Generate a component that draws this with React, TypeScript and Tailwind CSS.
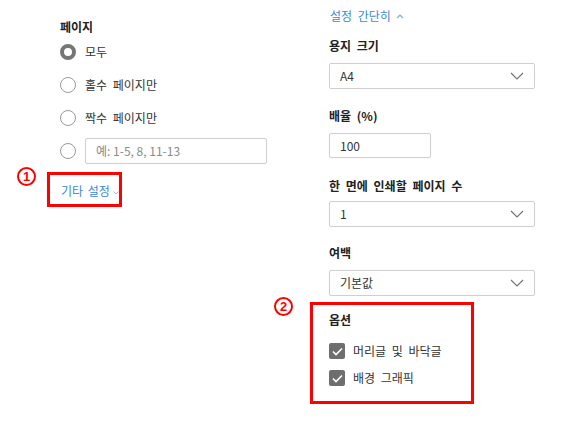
import React from "react";

const font = { fontFamily: '"Noto Sans CJK KR", "Noto Sans", sans-serif' };

function Chevron() {
  return (
    <svg width="14" height="8" viewBox="0 0 14 8" fill="none">
      <path d="M1 1l6 6 6-6" stroke="#707070" strokeWidth="1.1" />
    </svg>
  );
}

function Select({ value }: { value: string }) {
  return (
    <div className="ml-[19px] flex h-[26px] w-[206px] items-center justify-between rounded-[2px] border border-[#cfcfcf] bg-white pl-[10px] pr-[10px] text-[12px] text-[#333]">
      <span>{value}</span>
      <Chevron />
    </div>
  );
}

function Label({ children, className = "" }: { children: React.ReactNode; className?: string }) {
  return (
    <div className={`h-[16px] whitespace-nowrap text-[12px] font-bold leading-[16px] text-[#202124] ${className}`}>{children}</div>
  );
}

function Radio({ checked }: { checked?: boolean }) {
  return checked ? (
    <span className="box-border block h-[16px] w-[16px] shrink-0 rounded-full border-[4px] border-[#767676] bg-white" />
  ) : (
    <span className="box-border block h-[16px] w-[16px] shrink-0 rounded-full border-[1.5px] border-[#9a9a9a] bg-white" />
  );
}

function Check() {
  return (
    <span className="flex h-[16px] w-[16px] shrink-0 items-center justify-center rounded-[2px] bg-[#6e6e6e]">
      <svg width="11" height="9" viewBox="0 0 11 9" fill="none">
        <path d="M1 4.5l3 3 6-6" stroke="white" strokeWidth="1.6" />
      </svg>
    </span>
  );
}

function Badge({ n, className }: { n: string; className: string }) {
  return (
    <span
      className={`absolute flex h-[19px] w-[19px] items-center justify-center rounded-full border-[2px] border-[#ff0000] text-[13px] font-bold leading-none text-[#ff0000] ${className}`}
      style={{ fontFamily: '"Liberation Sans", sans-serif' }}
    >
      {n}
    </span>
  );
}

export default function App() {
  return (
    <div style={font} className="relative flex h-[436px] w-[567px] bg-white text-[#333] [word-spacing:3px]">
      <Badge n="1" className="left-[17px] top-[167px]" />
      <Badge n="2" className="left-[274px] top-[297px]" />

      {/* Left column */}
      <div className="ml-[47px] flex w-[263px] flex-col pt-[19px]">
        <Label className="ml-[13px]">페이지</Label>
        <div className="ml-[13px] flex flex-col">
          <div className="flex h-[33px] items-center gap-[9px]">
            <Radio checked />
            <span className="text-[12px]">모두</span>
          </div>
          <div className="flex h-[33px] items-center gap-[9px]">
            <Radio />
            <span className="text-[12px]">홀수 페이지만</span>
          </div>
          <div className="flex h-[33px] items-center gap-[9px]">
            <Radio />
            <span className="text-[12px]">짝수 페이지만</span>
          </div>
          <div className="flex h-[33px] items-center gap-[9px]">
            <Radio />
            <div className="flex h-[26px] w-[182px] items-center rounded-[2px] border border-[#cfcfcf] pl-[10px] text-[12px] text-[#8a8a8a] [word-spacing:0px]">
              예: 1-5, 8, 11-13
            </div>
          </div>
        </div>
        <div className="mt-[5px] flex h-[35px] w-[75px] items-center whitespace-nowrap border-[3px] border-[#ff0000] pl-[11px] pt-[3px] text-[12px] text-[#3b8ad8] [word-spacing:2px]">
          <span>기타 설정</span>
          <svg className="ml-[3px] mt-[4px] shrink-0" width="6" height="4" viewBox="0 0 6 4" fill="none">
            <path d="M0.5 0.5l2.5 2.5 2.5-2.5" stroke="#9bb8d6" strokeWidth="1" />
          </svg>
        </div>
      </div>

      {/* Right column */}
      <div className="flex w-[257px] flex-col pt-[8px]">
        <div className="ml-[20px] flex h-[16px] items-center whitespace-nowrap text-[12px] leading-[16px] text-[#3b8ad8]">
          <span>설정 간단히</span>
          <svg className="ml-[5px]" width="8" height="6" viewBox="0 0 8 6" fill="none">
            <path d="M1 5l3-3 3 3" stroke="#7fb0e0" strokeWidth="1.2" />
          </svg>
        </div>
        <Label className="ml-[19px] mt-[14px]">용지 크기</Label>
        <div className="mt-[9px]">
          <Select value="A4" />
        </div>
        <Label className="ml-[19px] mt-[19px]">배율 (%)</Label>
        <div className="ml-[19px] mt-[9px] flex h-[25px] w-[102px] items-center rounded-[2px] border border-[#cfcfcf] pl-[10px] text-[12px] text-[#333]">
          100
        </div>
        <Label className="ml-[19px] mt-[20px]">한 면에 인쇄할 페이지 수</Label>
        <div className="mt-[7px]">
          <Select value="1" />
        </div>
        <Label className="ml-[19px] mt-[18px]">여백</Label>
        <div className="mt-[9px]">
          <Select value="기본값" />
        </div>
        <div className="mt-[6px] flex h-[102px] w-[164px] flex-col border-[3px] border-[#ff0000] pl-[16px] pt-[7px]">
          <Label>옵션</Label>
          <div className="mt-[15px] flex h-[16px] items-center gap-[8px]">
            <Check />
            <span className="text-[12px]">머리글 및 바닥글</span>
          </div>
          <div className="mt-[11px] flex h-[16px] items-center gap-[8px]">
            <Check />
            <span className="text-[12px]">배경 그래픽</span>
          </div>
        </div>
      </div>
    </div>
  );
}
